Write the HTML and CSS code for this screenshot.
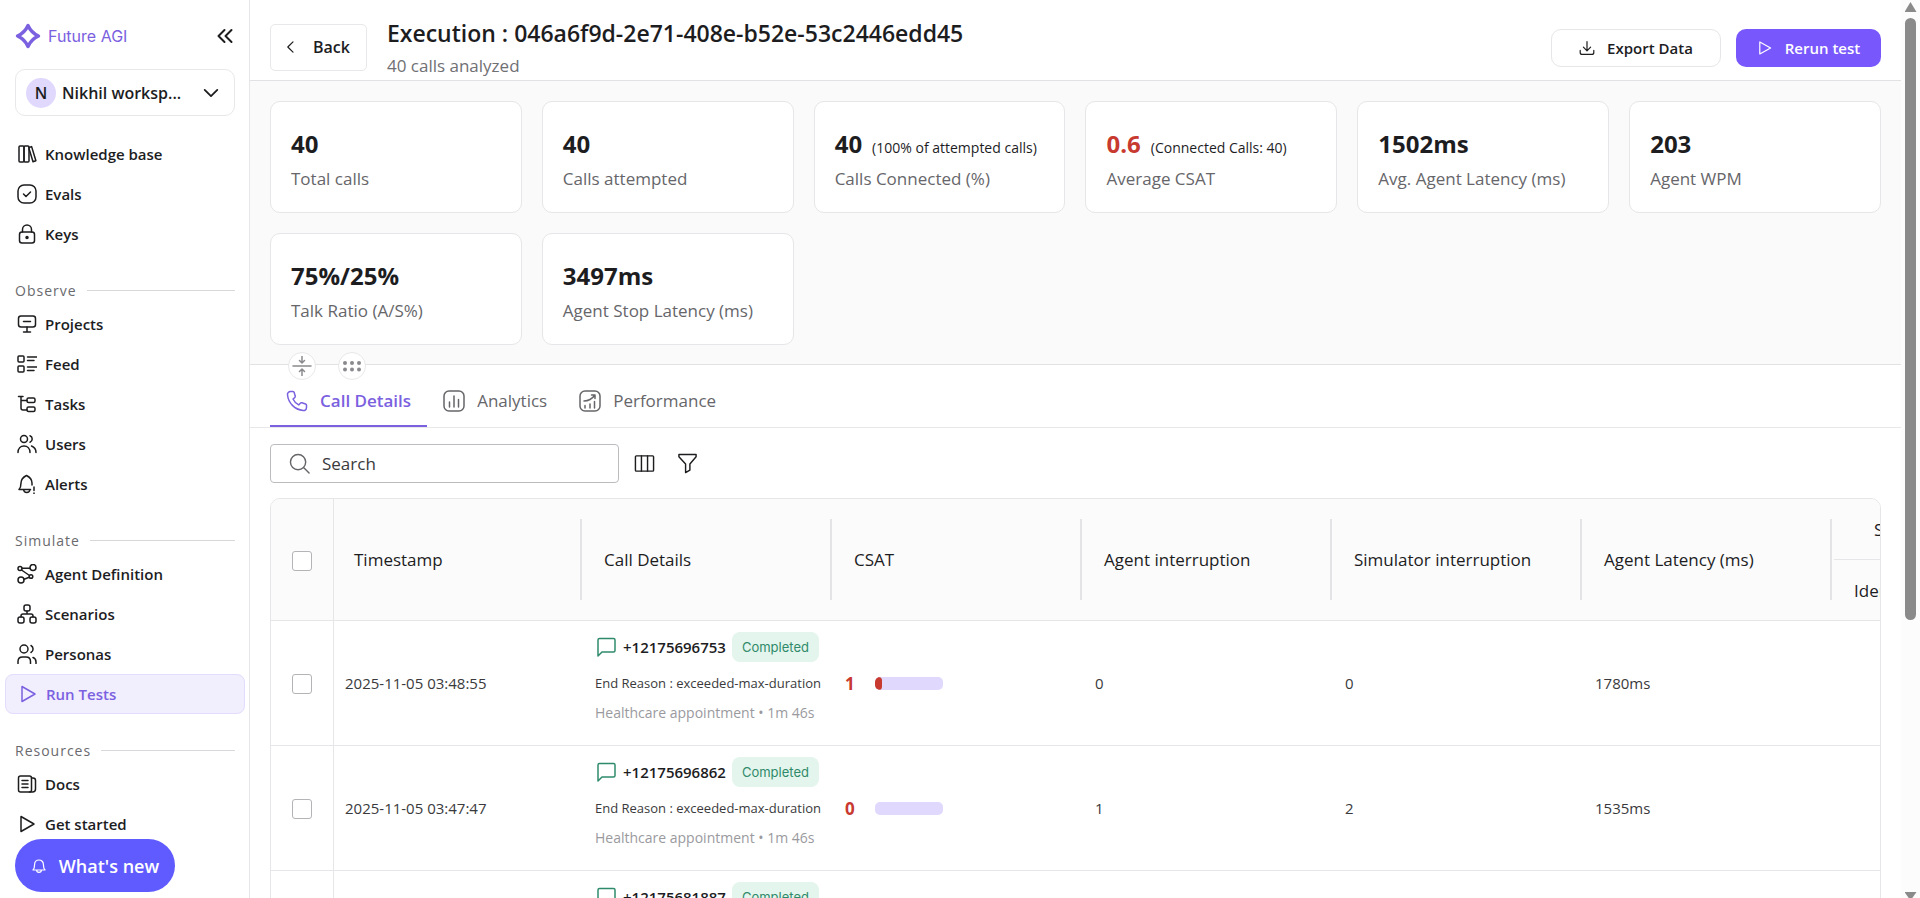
FILE: index.html
```html
<!DOCTYPE html>
<html lang="en">
<head>
  <meta charset="UTF-8">
  <meta name="viewport" content="width=device-width, initial-scale=1.0">
  <title>Future AGI - Run Tests</title>
  <link rel="stylesheet" href="styles.css">
</head>
<body>
  <div class="app">

    <!-- Sidebar -->
    <aside class="sidebar">
      <div class="brand">
        <a class="brand-link" href="#">
          <svg class="logo" viewBox="0 0 26 26"><path d="M13 2.500C15 7 19 11 23.500 13 19 15 15 19 13 23.500 11 19 7 15 2.500 13 7 11 11 7 13 2.500Z" fill="none" stroke="#7b61e0" stroke-width="3.400" stroke-linejoin="round"/></svg>
          Future AGI
        </a>
        <button class="icon-button" aria-label="Collapse sidebar">
          <svg class="icon collapse" viewBox="0 0 20 20"><path d="M9.500 4 3.500 10l6 6M16.500 4l-6 6 6 6"/></svg>
        </button>
      </div>

      <button class="workspace">
        <span class="avatar">N</span>
        <span class="workspace-name">Nikhil worksp...</span>
        <svg class="icon chevron" viewBox="0 0 20 20"><path d="M3 6.500l7 7 7-7"/></svg>
      </button>

      <nav>
        <ul class="nav-list">
          <li><a href="#"><svg class="icon" viewBox="0 0 20 20"><rect x="2" y="2" width="5" height="16" rx="1"/><rect x="7" y="2" width="5" height="16" rx="1"/><path d="M12 3.500l2.600-.9 4.300 14.200-2.900.9L12 4.500"/></svg>Knowledge base</a></li>
          <li><a href="#"><svg class="icon" viewBox="0 0 20 20"><rect x="1" y="1" width="18" height="18" rx="6"/><path d="M6.500 10l2.500 2.500 4.500-4.500"/></svg>Evals</a></li>
          <li><a href="#"><svg class="icon" viewBox="0 0 20 20"><rect x="2.500" y="8" width="15" height="11" rx="2.500"/><path d="M5.500 8V5.500a4.500 4.500 0 0 1 9 0V8"/><circle cx="10" cy="13.500" r="1" fill="currentColor"/></svg>Keys</a></li>
        </ul>

        <h2 class="nav-title">Observe</h2>
        <ul class="nav-list">
          <li><a href="#"><svg class="icon" viewBox="0 0 20 20"><rect x="1.500" y="2" width="17" height="11" rx="2.500"/><path d="M6.500 7.500h7M10 13v5M6.500 18h7"/></svg>Projects</a></li>
          <li><a href="#"><svg class="icon" viewBox="0 0 20 20"><rect x="1" y="2" width="6" height="6" rx="1"/><rect x="1" y="12" width="6" height="6" rx="1"/><path d="M10.500 3H20M10.500 6.500H17M10.500 13H20M10.500 16.500H17"/></svg>Feed</a></li>
          <li><a href="#"><svg class="icon" viewBox="0 0 20 20"><path d="M1.500 2.500H6M4 2.500V14q0 2 2 2h4M4 6.500h6"/><rect x="10" y="4" width="8" height="4.500" rx="1.500"/><rect x="10" y="13" width="8" height="4.500" rx="1.500"/></svg>Tasks</a></li>
          <li><a href="#"><svg class="icon" viewBox="0 0 20 20"><circle cx="7" cy="5" r="3.500"/><path d="M13 1.800a3.500 3.500 0 0 1 0 6.500M1 18.500c0-4 2.500-6.500 6-6.500s6 2.500 6 6.500M14.500 12c2.700 1 4.500 3.300 4.500 6.500"/></svg>Users</a></li>
          <li><a href="#"><svg class="icon" viewBox="0 0 20 20"><path d="M13.500 15.500H2c1.500-1.500 2-3 2-6.500 0-4 2.500-6 5.500-7.500C12.500 3 15 5 15 9v2M6.500 15.500c.5 4 6 4 6.500 0M17 13v3.500M17 19v.5"/></svg>Alerts</a></li>
        </ul>

        <h2 class="nav-title">Simulate</h2>
        <ul class="nav-list">
          <li><a href="#"><svg class="icon" viewBox="0 0 20 20"><circle cx="3" cy="4.500" r="2"/><circle cx="16" cy="3.500" r="3"/><circle cx="14" cy="12.500" r="1.800"/><circle cx="4" cy="16" r="3"/><path d="M5 4.300h8M4.500 6l8 5.500M7 15.300l5.300-2"/></svg>Agent Definition</a></li>
          <li><a href="#"><svg class="icon" viewBox="0 0 20 20"><rect x="7" y="1" width="6" height="6" rx="2"/><rect x="1" y="13" width="6" height="6" rx="2"/><rect x="13" y="13" width="6" height="6" rx="2"/><path d="M10 7v3M4 13v-1q0-2 2-2h8q2 0 2 2v1"/></svg>Scenarios</a></li>
          <li><a href="#"><svg class="icon" viewBox="0 0 20 20"><circle cx="7" cy="5" r="4"/><path d="M14 1.500a4 4 0 0 1 0 7M1 19.500v-2q0-4.500 4.500-4.500H9q4.500 0 4.500 4.500v2M16 13.500q3 1 3 4.500v1.500"/></svg>Personas</a></li>
          <li><a class="active" href="#"><svg class="icon" viewBox="0 0 20 20"><path d="M4 2.500v15L17 10Z"/></svg>Run Tests</a></li>
        </ul>

        <h2 class="nav-title">Resources</h2>
        <ul class="nav-list">
          <li><a href="#"><svg class="icon" viewBox="0 0 20 20"><rect x="1.500" y="2" width="13" height="16" rx="2"/><path d="M14.500 4H16q2.500 0 2.500 2.500V15q0 3-3 3h-3M5 6.500h6M5 10h6M5 13.500h6"/></svg>Docs</a></li>
          <li><a href="#"><svg class="icon" viewBox="0 0 20 20"><path d="M4 2.500v15L17 10Z"/></svg>Get started</a></li>
        </ul>
      </nav>

      <button class="whats-new">
        <svg class="icon bell" viewBox="0 0 20 20"><path d="M2.500 15c1.500-1.800 2-3.500 2-7a5.500 5.500 0 0 1 11 0c0 3.500.5 5.200 2 7ZM7 15c0 4 6 4 6 0"/></svg>
        What's new
      </button>
    </aside>

    <!-- Main content -->
    <main class="main">
      <header class="page-header">
        <button class="back-button">
          <svg class="icon" viewBox="0 0 20 20"><path d="M12.500 3.500 6 10l6.500 6.500"/></svg>
          Back
        </button>
        <div class="heading">
          <h1>Execution : 046a6f9d-2e71-408e-b52e-53c2446edd45</h1>
          <p>40 calls analyzed</p>
        </div>
        <div class="actions">
          <button class="export-button">
            <svg class="icon" viewBox="0 0 20 20"><path d="M10 2v11M5.500 9l4.500 4.500L14.500 9M1.500 13v2.500q0 2.500 2.500 2.500h12q2.500 0 2.500-2.500V13"/></svg>
            Export Data
          </button>
          <button class="rerun-button">
            <svg class="icon" viewBox="0 0 20 20"><path d="M3.500 2.500v15L17 10Z"/></svg>
            Rerun test
          </button>
        </div>
      </header>

      <section class="stats">
        <div class="card"><p class="value">40</p><p class="label">Total calls</p></div>
        <div class="card"><p class="value">40</p><p class="label">Calls attempted</p></div>
        <div class="card"><p class="value">40 <small>(100% of attempted calls)</small></p><p class="label">Calls Connected (%)</p></div>
        <div class="card"><p class="value"><span class="bad">0.6</span> <small>(Connected Calls: 40)</small></p><p class="label">Average CSAT</p></div>
        <div class="card"><p class="value">1502ms</p><p class="label">Avg. Agent Latency (ms)</p></div>
        <div class="card"><p class="value">203</p><p class="label">Agent WPM</p></div>
        <div class="card"><p class="value">75%/25%</p><p class="label">Talk Ratio (A/S%)</p></div>
        <div class="card"><p class="value">3497ms</p><p class="label">Agent Stop Latency (ms)</p></div>

        <!-- Panel handles on the divider -->
        <div class="handles">
          <button aria-label="Collapse panel"><svg class="icon" viewBox="0 0 20 20"><path d="M1 10h18M10 .5v6M7.500 4.500 10 7l2.500-2.500M10 19.500v-6M7.500 15.500 10 13l2.500 2.500"/></svg></button>
          <button aria-label="Drag panel"><svg class="icon dots" viewBox="0 0 20 20"><circle cx="3" cy="7" r="2"/><circle cx="10" cy="7" r="2"/><circle cx="17" cy="7" r="2"/><circle cx="3" cy="13.500" r="2"/><circle cx="10" cy="13.500" r="2"/><circle cx="17" cy="13.500" r="2"/></svg></button>
        </div>
      </section>

      <div class="tabs" role="tablist">
        <button class="tab selected" role="tab" aria-selected="true"><svg class="icon" viewBox="0 0 22 22"><path d="M4.500 1.500H7c.6 0 1 .4 1.200 1l1 3.600c.2.600 0 1.200-.5 1.600L7 9c1.200 2.600 3 4.500 5.700 5.900l1.600-1.700c.4-.5 1-.6 1.600-.4l3.600 1.200c.6.2 1 .6 1 1.200v2.300c0 2-1.500 3.200-3.300 3C8.500 19.500 2.300 13 1.500 4.800 1.300 3 2.700 1.500 4.500 1.500Z"/></svg>Call Details</button>
        <button class="tab" role="tab" aria-selected="false"><svg class="icon" viewBox="0 0 22 22"><rect x="1" y="1" width="20" height="20" rx="5"/><path d="M6.500 12v5M11 6v11M15.500 9.500V17"/></svg>Analytics</button>
        <button class="tab" role="tab" aria-selected="false"><svg class="icon" viewBox="0 0 22 22"><rect x="1" y="1" width="20" height="20" rx="5"/><path d="M6 15.500V18M11 14v4M15.500 11.500V18M5 11c4 0 8-2 11-6M12.500 5H16v3.500"/></svg>Performance</button>
      </div>

      <div class="toolbar">
        <label class="search">
          <svg class="icon" viewBox="0 0 22 22"><circle cx="9.500" cy="9.500" r="8"/><path d="M15.500 15.500 21 21"/></svg>
          <input type="text" placeholder="Search" aria-label="Search">
        </label>
        <button class="icon-button" aria-label="Columns"><svg class="icon" viewBox="0 0 22 22"><rect x="1.500" y="3" width="19" height="16" rx="1"/><path d="M7.800 3v16M14.200 3v16"/></svg></button>
        <button class="icon-button" aria-label="Filter"><svg class="icon" viewBox="0 0 22 22"><path d="M2 1.500h18v2.500l-6.500 7.500V18L9 20.500v-9L2 4Z"/></svg></button>
      </div>

      <div class="table-wrap">
        <table>
          <colgroup>
            <col class="col-check"><col><col><col><col><col><col><col>
          </colgroup>
          <thead>
            <tr>
              <th class="check" rowspan="2"><input type="checkbox" aria-label="Select all calls"></th>
              <th rowspan="2"><div class="head">Timestamp</div></th>
              <th rowspan="2"><div class="head">Call Details</div></th>
              <th rowspan="2"><div class="head">CSAT</div></th>
              <th rowspan="2"><div class="head">Agent interruption</div></th>
              <th rowspan="2"><div class="head">Simulator interruption</div></th>
              <th rowspan="2"><div class="head">Agent Latency (ms)</div></th>
              <th class="group">Scenario</th>
            </tr>
            <tr>
              <th class="sub">Identity</th>
            </tr>
          </thead>
          <tbody>
            <tr>
              <td class="check"><input type="checkbox" aria-label="Select call 1"></td>
              <td>2025-11-05 03:48:55</td>
              <td class="details">
                <div class="call"><svg class="icon chat" viewBox="0 0 20 20"><path d="M2 19V3q0-1.500 1.500-1.500h14Q19 1.500 19 3v10.500q0 1.500-1.500 1.500H6Z"/></svg><b>+12175696753</b><span class="badge">Completed</span></div>
                <div class="reason">End Reason : exceeded-max-duration</div>
                <div class="scenario">Healthcare appointment • 1m 46s</div>
              </td>
              <td><div class="csat"><b>1</b><span class="bar"><span class="fill" style="width: 10%"></span></span></div></td>
              <td>0</td>
              <td>0</td>
              <td>1780ms</td>
              <td></td>
            </tr>
            <tr>
              <td class="check"><input type="checkbox" aria-label="Select call 2"></td>
              <td>2025-11-05 03:47:47</td>
              <td class="details">
                <div class="call"><svg class="icon chat" viewBox="0 0 20 20"><path d="M2 19V3q0-1.500 1.500-1.500h14Q19 1.500 19 3v10.500q0 1.500-1.500 1.500H6Z"/></svg><b>+12175696862</b><span class="badge">Completed</span></div>
                <div class="reason">End Reason : exceeded-max-duration</div>
                <div class="scenario">Healthcare appointment • 1m 46s</div>
              </td>
              <td><div class="csat"><b>0</b><span class="bar"><span class="fill" style="width: 0%"></span></span></div></td>
              <td>1</td>
              <td>2</td>
              <td>1535ms</td>
              <td></td>
            </tr>
            <tr>
              <td class="check"></td>
              <td></td>
              <td class="details">
                <div class="call"><svg class="icon chat" viewBox="0 0 20 20"><path d="M2 19V3q0-1.500 1.500-1.500h14Q19 1.500 19 3v10.500q0 1.500-1.500 1.500H6Z"/></svg><b>+12175681887</b><span class="badge">Completed</span></div>
              </td>
              <td></td>
              <td></td>
              <td></td>
              <td></td>
              <td></td>
            </tr>
          </tbody>
        </table>
      </div>
    </main>

    <!-- Scrollbar -->
    <div class="scrollbar" aria-hidden="true">
      <span class="arrow up"></span>
      <span class="thumb"></span>
      <span class="arrow down"></span>
    </div>
  </div>
</body>
</html>
```

FILE: styles.css
```css
* {
  box-sizing: border-box;
}

body {
  margin: 0;
  height: 100vh;
  overflow: hidden;
  background: #fff;
  color: #1d1d1f;
  font-family: 'Open Sans', sans-serif;
  font-size: 14px;
}

button, input {
  font-family: inherit;
  color: inherit;
}

button {
  background: none;
  border: 0;
  padding: 0;
  cursor: pointer;
}

h1, h2, p, ul {
  margin: 0;
  padding: 0;
}

.icon {
  width: 20px;
  height: 20px;
  flex-shrink: 0;
  fill: none;
  stroke: currentColor;
  stroke-width: 1.5;
  stroke-linecap: round;
  stroke-linejoin: round;
}

.icon-button {
  display: flex;
}

.app {
  display: flex;
  height: 100vh;
}

/* Sidebar */
.sidebar {
  width: 250px;
  flex-shrink: 0;
  padding: 20px 14px 0 15px;
  border-right: 1px solid #e6e6e8;
  overflow: hidden;
}

.brand {
  display: flex;
  align-items: center;
  justify-content: space-between;
  height: 32px;
}

.brand-link {
  display: flex;
  align-items: center;
  gap: 7px;
  color: #7b61e0;
  font-family: Inter, sans-serif;
  font-size: 16px;
  text-decoration: none;
}

.logo {
  width: 26px;
  height: 26px;
}

.collapse {
  stroke-width: 2;
}

.workspace {
  display: flex;
  align-items: center;
  width: 100%;
  height: 47px;
  margin: 17px 0 18px;
  padding: 0 14px 0 10px;
  border: 1px solid #e8e8ea;
  border-radius: 10px;
  font-size: 16px;
  font-weight: 600;
  text-align: left;
}

.avatar {
  width: 30px;
  height: 30px;
  margin-right: 6px;
  border-radius: 50%;
  background: #e0d8fd;
  line-height: 30px;
  text-align: center;
}

.workspace-name {
  flex: 1;
  min-width: 0;
  white-space: nowrap;
}

.chevron {
  width: 18px;
  height: 18px;
  stroke-width: 2;
}

.nav-list {
  list-style: none;
  margin: 0 -10px;
}

.nav-list a {
  display: flex;
  align-items: center;
  gap: 8px;
  height: 40px;
  padding: 0 11px;
  border: 1px solid transparent;
  border-radius: 8px;
  color: #1d1d1f;
  font-size: 15px;
  font-weight: 600;
  text-decoration: none;
}

.nav-list a.active {
  padding-left: 12px;
  background: #f1eefe;
  border-color: #e3dcfc;
  color: #7b61e0;
}

.nav-title {
  display: flex;
  align-items: center;
  gap: 10px;
  height: 20px;
  margin: 26px 0 4px;
  color: #6a6a6e;
  font-size: 14px;
  font-weight: 500;
  letter-spacing: 1px;
}

.nav-title::after {
  content: "";
  flex: 1;
  height: 1px;
  background: #d8d8da;
}

.whats-new {
  position: fixed;
  left: 15px;
  bottom: 6px;
  display: flex;
  align-items: center;
  justify-content: center;
  gap: 12px;
  width: 160px;
  height: 53px;
  border-radius: 27px;
  background: #605bff;
  color: #fff;
  font-size: 18px;
  font-weight: 600;
}

.bell {
  width: 16px;
  height: 16px;
}

/* Header */
.main {
  flex: 1;
  min-width: 0;
  overflow: hidden;
}

.page-header {
  display: flex;
  align-items: center;
  height: 81px;
  padding: 0 20px;
  border-bottom: 1px solid #e2e2e4;
}

.back-button {
  display: flex;
  align-items: center;
  gap: 14px;
  height: 47px;
  margin: 14px 20px 0 0;
  padding: 0 16px 0 12px;
  border: 1px solid #e8e8ea;
  border-radius: 5px;
  font-size: 16px;
  font-weight: 600;
}

.back-button .icon {
  width: 16px;
  height: 16px;
}

.heading {
  flex: 1;
  padding-top: 19px;
}

.heading h1 {
  font-size: 23px;
  font-weight: 600;
  line-height: 32px;
}

.heading p {
  color: #707074;
  font-size: 17px;
  line-height: 34px;
}

.actions {
  display: flex;
  gap: 15px;
  padding-top: 15px;
}

.actions button {
  display: flex;
  align-items: center;
  justify-content: center;
  height: 38px;
  border-radius: 10px;
  font-size: 15px;
  font-weight: 600;
}

.actions .icon {
  width: 16px;
  height: 16px;
}

.export-button {
  gap: 12px;
  width: 170px;
  border: 1px solid #e6e6e8;
}

.rerun-button {
  gap: 12px;
  width: 145px;
  background: #7857fc;
  color: #fff;
}

/* Stats */
.stats {
  position: relative;
  display: grid;
  grid-template-columns: repeat(6, 1fr);
  gap: 20px;
  padding: 20px 20px 19px;
  background: #fafafa;
  border-bottom: 1px solid #e2e2e4;
}

.card {
  height: 112px;
  padding: 24px 20px 0;
  background: #fff;
  border: 1px solid #e6e6e8;
  border-radius: 10px;
}

.value {
  display: flex;
  align-items: baseline;
  gap: 10px;
  height: 35px;
  font-size: 24px;
  font-weight: 700;
  line-height: 35px;
  white-space: nowrap;
}

.value small {
  font-size: 14px;
  font-weight: 500;
}

.bad {
  color: #c8392f;
}

.label {
  color: #66666a;
  font-size: 17px;
  font-weight: 500;
  line-height: 36px;
  white-space: nowrap;
}

.handles {
  position: absolute;
  left: 38px;
  bottom: -16px;
  display: flex;
  gap: 22px;
}

.handles button {
  display: flex;
  align-items: center;
  justify-content: center;
  width: 28px;
  height: 28px;
  border: 1px solid #e8e8ea;
  border-radius: 50%;
  background: #fff;
  color: #8a8a8e;
}

.handles .dots {
  fill: currentColor;
  stroke: none;
}

/* Tabs */
.tabs {
  display: flex;
  height: 63px;
  padding: 0 20px;
  border-bottom: 1px solid #e8e8ea;
}

.tab {
  display: flex;
  align-items: center;
  gap: 12px;
  padding: 11px 16px 0;
  border-bottom: 2px solid transparent;
  color: #66666a;
  font-size: 17px;
  font-weight: 500;
}

.tab .icon {
  width: 22px;
  height: 22px;
}

.tab.selected {
  border-bottom-color: #7b61e0;
  color: #7b61e0;
  font-weight: 600;
}

/* Toolbar */
.toolbar {
  display: flex;
  align-items: center;
  gap: 22px;
  padding: 16px 20px 15px;
}

.toolbar .icon {
  width: 21px;
  height: 21px;
}

.search {
  display: flex;
  align-items: center;
  gap: 12px;
  width: 349px;
  height: 39px;
  margin-right: -7px;
  padding: 0 18px;
  border: 1px solid #bcbcc0;
  border-radius: 4px;
  color: #66666a;
}

.search input {
  flex: 1;
  min-width: 0;
  padding: 0;
  border: 0;
  outline: 0;
  font-size: 17px;
}

.search input::placeholder {
  color: #3a3a3c;
}

/* Table */
.table-wrap {
  height: 480px;
  margin: 0 20px;
  border: 1px solid #e6e6e8;
  border-radius: 10px;
  overflow: hidden;
}

table {
  width: 1813px;
  table-layout: fixed;
  border-collapse: separate;
  border-spacing: 0;
}

col {
  width: 250px;
}

.col-check {
  width: 63px;
}

th {
  height: 61px;
  padding: 0;
  background: #fbfbfb;
  border-bottom: 1px solid #e6e6e8;
  font-size: 17px;
  font-weight: 500;
  text-align: left;
}

.head {
  height: 81px;
  margin-right: 2px;
  padding-left: 20px;
  border-right: 2px solid #e4e4e6;
  line-height: 81px;
}

.group {
  padding-left: 40px;
}

.sub {
  padding-left: 20px;
}

td {
  height: 125px;
  padding: 0 0 0 11px;
  border-bottom: 1px solid #e6e6e8;
  color: #3a3a3c;
  font-size: 15px;
  white-space: nowrap;
}

.check {
  padding: 0;
  border-right: 1px solid #e6e6e8;
  text-align: center;
}

input[type="checkbox"] {
  appearance: none;
  width: 20px;
  height: 20px;
  margin: 0;
  border: 1px solid #b4b4b8;
  border-radius: 3px;
  background: #fff;
  vertical-align: middle;
}

.details {
  padding-top: 11px;
  vertical-align: top;
}

.call {
  display: flex;
  align-items: center;
  height: 30px;
}

.call b {
  margin: 0 6px 0 7px;
  color: #1d1d1f;
  font-size: 15px;
  font-weight: 600;
}

.chat {
  margin-left: 1px;
  color: #2f8a6b;
}

.badge {
  padding: 0 10px;
  border-radius: 8px;
  background: #e3f5ec;
  color: #2f8a6b;
  font-family: Inter, sans-serif;
  font-size: 13px;
  line-height: 30px;
}

.reason {
  margin-top: 5px;
  font-size: 13px;
  line-height: 32px;
}

.scenario {
  color: #9a9a9e;
  font-size: 14px;
  line-height: 28px;
}

.csat {
  display: flex;
  align-items: center;
  gap: 20px;
}

.csat b {
  width: 10px;
  color: #c8392f;
  font-size: 17px;
}

.bar {
  width: 68px;
  height: 13px;
  border-radius: 5px;
  background: #e0d8fd;
  overflow: hidden;
}

.fill {
  display: block;
  height: 100%;
  border-radius: 5px;
  background: #c8392f;
}

/* Scrollbar */
.scrollbar {
  display: flex;
  flex-direction: column;
  align-items: center;
  width: 19px;
  flex-shrink: 0;
  background: #fcfcfc;
}

.arrow {
  width: 12px;
  height: 10px;
  background: #8a8a8a;
}

.up {
  margin: 2px 0 6px;
  clip-path: polygon(50% 0, 100% 100%, 0 100%);
}

.down {
  margin-top: auto;
  height: 6px;
  clip-path: polygon(0 0, 100% 0, 65% 100%, 35% 100%);
}

.thumb {
  width: 11px;
  height: 67%;
  border-radius: 6px;
  background: #8a8a8a;
}
```
